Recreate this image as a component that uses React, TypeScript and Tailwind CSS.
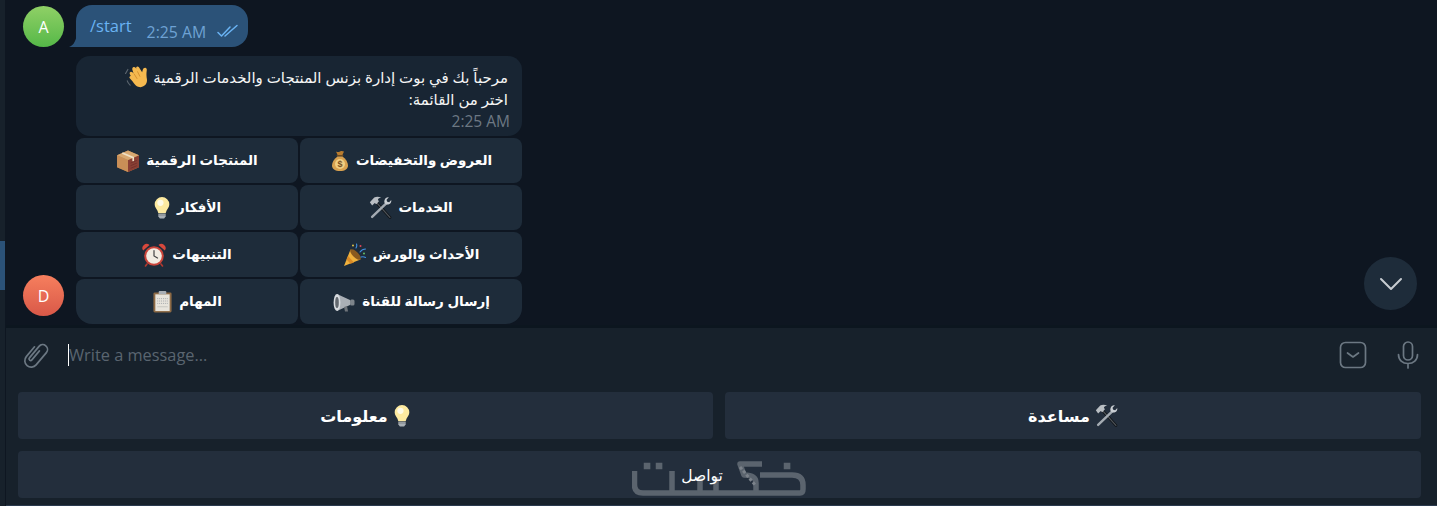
import React from "react";

const Wave = ({ s = 24 }: { s?: number }) => (
  <svg width={s} height={s} viewBox="1 2 21 21" fill="none">
    <path d="M1.500 8.500 3.500 5M3 15c.5 1.500 1.200 2.600 2.500 3.800" stroke="#5c6670" strokeWidth="1" strokeLinecap="round" />
    <path d="M6 10.500c-1-1.500-1.500-3 0-3.500 1-.3 1.700.5 2.500 1.500L7.500 5.500c-.5-1.500.2-2.500 1.200-2.700 1-.2 1.600.5 2.100 1.600L10.800 3c.5-.8 1.700-.9 2.400 0l2.800 4.500.5-2c.5-1.500 1.500-2.200 2.700-1.800 1 .4 1 1.500.8 2.500-.4 2.500-.2 5 .2 7.500.5 3.500-2 6.800-5.500 6.800-3.300 0-5.500-2.500-7-5L5 12.500c-.5-.8.300-1.500 1-2z" fill="#f5b94f" />
    <path d="M9 9l2.500 4M12 7l2 4" stroke="#d48f2e" strokeWidth=".8" strokeLinecap="round" />
  </svg>
);
const Bag = () => (
  <svg width="20" height="24" viewBox="0 0 20 22" fill="none">
    <path d="M6 1.500c1.500.8 2.500.8 4 0s2.500-.5 4 0l-2 4.500H8z" fill="#b97c2e" />
    <rect x="6.500" y="5" width="7" height="1.600" rx=".8" fill="#6b4a1f" />
    <path d="M7.500 6.500C4 9 2 12.500 2 15.500 2 19 5 21 10 21s8-2 8-5.500c0-3-2-6.500-5.500-9z" fill="#d9a250" />
    <circle cx="10" cy="14" r="5" fill="#f2cf83" />
    <text x="10" y="17.200" textAnchor="middle" fontSize="9" fontWeight="700" fill="#7a5220" fontFamily="Liberation Sans, sans-serif">$</text>
  </svg>
);
const Box = () => (
  <svg width="24" height="24" viewBox="0 0 23 23" fill="none">
    <path d="M11.500 1.500 22 6v11.500l-10.500 4.500L1 17.500V6z" fill="#b37a43" />
    <path d="M1 6l10.500 4.500V22L1 17.500z" fill="#c98f57" />
    <path d="M11.500 10.500 22 6v11.500l-10.500 4.500z" fill="#8a3f34" />
    <path d="M1 6l10.500-4.500L22 6l-10.500 4.500z" fill="#d7a871" />
    <path d="M6 3.800 16.500 8.300v3.500" stroke="#efe0c4" strokeWidth="1.600" />
    <path d="M14 13.500l6-2.500M14 16l6-2.500M14 18.500l6-2.500" stroke="#6e2f2a" strokeWidth=".8" />
  </svg>
);
const Tools = ({ s = 23 }: { s?: number }) => (
  <svg width={s} height={s} viewBox="0 0 22 22" fill="none">
    <path d="M6.500 5.500 20 20.500" stroke="#0f1215" strokeWidth="2.600" strokeLinecap="round" />
    <path d="M6.500 5.500 20 20.500" stroke="#4d5359" strokeWidth="1.200" strokeLinecap="round" />
    <path d="M17 6.500 3 20" stroke="#a4abb2" strokeWidth="2.300" strokeLinecap="round" />
    <path d="M.8 6 5 1.500c2-1 4-1 6.800 0-1.800.3-2.800 1-3.300 2l1 1.500L7 7.800 5.500 6.800 3 9z" fill="#b9bec3" />
    <path d="M15 3.500c.5-1.500 2-2.500 4-2.200L16.800 3.500l.5 2 2 .5 2-2.200c.3 2-.7 3.500-2.200 4.200-1.500.5-3 .2-4-1-.6-1-.6-2-.1-3.500z" fill="#c9ced3" />
  </svg>
);
const Bulb = () => (
  <svg width="18" height="23" viewBox="3 0 16 22" fill="none">
    <path d="M11 1a7 7 0 0 0-7 7c0 2.800 1.700 4.200 2.700 6 .5.900.5 1.800.8 2.500h7c.3-.7.300-1.600.8-2.500 1-1.800 2.700-3.200 2.700-6a7 7 0 0 0-7-7z" fill="#fdeaa0" />
    <circle cx="9.500" cy="6.500" r="3" fill="#fffbe6" />
    <path d="M7.500 17h7v2.500l-1.500 2h-4l-1.500-2z" fill="#a8afb5" />
    <path d="M7.500 18.200h7" stroke="#6f767c" strokeWidth=".7" />
  </svg>
);
const Party = () => (
  <svg width="24" height="24" viewBox="0 0 24 24" fill="none">
    <path d="M1 23 7.500 6.500 17.500 16.500z" fill="#f0b23d" />
    <path d="M5 13l6 6.500-3.500 1.200L3.500 16.500z" fill="#d98a26" />
    <ellipse cx="12.500" cy="11.500" rx="2.800" ry="7" transform="rotate(-45 12.500 11.500)" fill="#8a5a1e" />
    <path d="M13 5c1-1.500 1-2.500.5-4M17 9c1.500-2 3-3 5.500-3M18 14c1.500-.5 3-.5 4.500.5" stroke="#3f8fe0" strokeWidth="1.100" strokeLinecap="round" />
    <circle cx="17.500" cy="3" r="1" fill="#e0455a" />
    <circle cx="21" cy="10.500" r="1" fill="#63c06a" />
    <circle cx="10" cy="2.500" r=".9" fill="#f2d04a" />
  </svg>
);
const Clock = () => (
  <svg width="24" height="24" viewBox="0 0 24 24" fill="none">
    <path d="M1.200 7.500A4.200 4.200 0 0 1 7.500 2zM22.800 7.500A4.200 4.200 0 0 0 16.500 2z" fill="#d8483c" />
    <path d="M5 21l-1.500 2M19 21l1.500 2" stroke="#b2392f" strokeWidth="1.600" strokeLinecap="round" />
    <circle cx="12" cy="13" r="9.800" fill="#c9443a" />
    <circle cx="12" cy="13" r="7.800" fill="#f1ece2" />
    <path d="M12 7.500V13l3.500 2" stroke="#444" strokeWidth="1.200" strokeLinecap="round" />
  </svg>
);
const Horn = () => (
  <svg width="24" height="24" viewBox="0 0 24 24" fill="none">
    <path d="M5 4 18 10v5L5 21z" fill="#aab0b6" />
    <ellipse cx="5" cy="12.500" rx="3.400" ry="8.500" fill="#d7dbdf" />
    <ellipse cx="5" cy="12.500" rx="1.800" ry="5.500" fill="#62686e" />
    <rect x="18" y="9.500" width="4.500" height="6" rx="1.500" fill="#7d848a" />
    <path d="M12 17l1 4.500h3L15 16z" fill="#6e747a" />
  </svg>
);
const Clip = () => (
  <svg width="21" height="23" viewBox="0 0 22 24" fill="none">
    <rect x="1.500" y="2.500" width="19" height="21" rx="1.500" fill="#8d6a45" />
    <rect x="3.500" y="4.500" width="15" height="17.500" fill="#e7e4dc" />
    <rect x="7" y="1" width="8" height="3.500" rx="1" fill="#a9afb5" />
    <path d="M5.500 9h11M5.500 11.500h11M5.500 14h11" stroke="#a3a7ab" strokeWidth="1" strokeDasharray="1 1" />
    <path d="M5.500 17.500h11" stroke="#c5c5bf" strokeWidth="1" />
  </svg>
);

const Key = ({ label, icon, cls = "" }: { label: string; icon: React.ReactNode; cls?: string }) => (
  <div className={`h-[45px] bg-[#1e2c3a] flex items-center justify-center gap-[6px] text-[13.500px] font-semibold text-white rounded-[8px] ${cls}`}>
    <span className="pb-[1px]">{label}</span>
    {icon}
  </div>
);

const Avatar = ({ letter, cls }: { letter: string; cls: string }) => (
  <div className={`w-[41px] h-[41px] rounded-full flex items-center justify-center text-white text-[16px] font-medium shrink-0 ${cls}`}>{letter}</div>
);

export default function App() {
  return (
    <div className="w-[1437px] h-[506px] overflow-hidden flex bg-[#17212b] font-['Open_Sans','Noto_Sans','DejaVu_Sans',sans-serif]">
      <div className="w-[6px] shrink-0 h-full flex flex-col border-r border-[#0e1621] bg-[#17212b]">
        <div className="h-[241px]" />
        <div className="h-[49px] w-[5px] bg-[#2b5278]" />
      </div>
      <div className="flex-1 flex flex-col min-w-0">
        <div className="relative h-[325px] shrink-0 bg-[#0e1621] pl-[17px] pt-[5px]">
          <div className="flex items-end gap-[12px] h-[42px]">
            <Avatar letter="A" cls="bg-gradient-to-b from-[#8fd066] to-[#54b848]" />
            <div className="relative w-[172px] h-[42px] bg-[#2b5278] rounded-[16px] rounded-bl-none flex pl-[14px]">
              <svg className="absolute left-[-7px] bottom-0" width="8" height="14" viewBox="0 0 8 14">
                <path d="M8 0v14H0c3-1 7-4 8-14z" fill="#2b5278" />
              </svg>
              <span className="text-[16.500px] leading-[20px] mt-[11px] text-[#6ab3f3]">/start</span>
              <span className="text-[15.800px] leading-[20px] mt-[17px] ml-[15px] text-[#6ea2d4]">2:25 AM</span>
              <svg className="ml-[11px] mt-[19px]" width="22" height="14" viewBox="0 0 22 14" fill="none" stroke="#6ab3f3" strokeWidth="1.500" strokeLinecap="round" strokeLinejoin="round">
                <path d="M1 8.500 4.500 12 13 3" />
                <path d="M8 12 20 1.500" />
              </svg>
            </div>
          </div>
          <div className="flex items-end gap-[12px] mt-[9px]">
            <Avatar letter="D" cls="mb-[8px] bg-gradient-to-b from-[#f67f5e] to-[#d95848]" />
            <div className="w-[446px] flex flex-col gap-[2px]">
              <div dir="rtl" className="h-[80px] bg-[#182533] rounded-[14px] pr-[14px] pl-[12px] pt-[10px] text-[15px] leading-[23px] text-[#f5f5f5]">
                <div className="flex items-center gap-[4px] h-[23px]"><span>مرحباً بك في بوت إدارة بزنس المنتجات والخدمات الرقمية</span><Wave /></div>
                <div className="-mt-[1px]">اختر من القائمة:</div>
                <div dir="ltr" className="text-right text-[15.500px] leading-[19px] mt-[1px] -mr-[2px] text-[#6d7883]">2:25 AM</div>
              </div>
              <div dir="rtl" className="grid grid-cols-2 gap-[2px]">
                <Key label="العروض والتخفيضات" icon={<Bag />} />
                <Key label="المنتجات الرقمية" icon={<Box />} />
                <Key label="الخدمات" icon={<Tools />} />
                <Key label="الأفكار" icon={<Bulb />} />
                <Key label="الأحداث والورش" icon={<Party />} />
                <Key label="التنبيهات" icon={<Clock />} />
                <Key label="إرسال رسالة للقناة" icon={<Horn />} cls="rounded-br-[16px]" />
                <Key label="المهام" icon={<Clip />} cls="rounded-bl-[16px]" />
              </div>
            </div>
          </div>
          <div className="absolute right-[20px] top-[257px] w-[53px] h-[53px] rounded-full bg-[#1e2c3a] flex items-center justify-center">
            <svg width="24" height="14" viewBox="0 0 24 14" fill="none" stroke="#c7ccd1" strokeWidth="2" strokeLinecap="round" strokeLinejoin="round"><path d="M2 2l10 10L22 2" /></svg>
          </div>
        </div>
        <div className="h-[3px] shrink-0 bg-[#0c161f]" />
        <div className="h-[54px] shrink-0 flex items-center pl-[15px] pr-[16px]">
          <svg width="30" height="32" viewBox="0 0 24 30" fill="none" stroke="#6c7883" strokeWidth="1.600" strokeLinecap="round" strokeLinejoin="round" className="shrink-0">
            <g transform="rotate(40 12 15)">
              <path d="M6 10V22a6 6 0 0 0 12 0V7a4.500 4.500 0 0 0-9 0V21a1.500 1.500 0 0 0 3 0V10" />
            </g>
          </svg>
          <div className="w-px h-[22px] bg-white ml-[17px]" />
          <span className="text-[16.350px] leading-[22px] text-[#5a6570]">Write a message...</span>
          <div className="flex-1" />
          <svg width="28" height="28" viewBox="0 0 28 28" fill="none" stroke="#6c7883" strokeWidth="1.700" strokeLinecap="round" strokeLinejoin="round" className="shrink-0 -mt-[1px]">
            <rect x="1.500" y="1.500" width="25" height="25" rx="5" />
            <path d="M8.500 12l5.500 4 5.500-4" />
          </svg>
          <svg width="24" height="28" viewBox="0 0 24 28" fill="none" stroke="#6c7883" strokeWidth="1.700" strokeLinecap="round" className="ml-[29px] mr-[1px] shrink-0">
            <rect x="7.500" y="1" width="9" height="18" rx="4.500" />
            <path d="M2.500 13.500c0 5.500 4 9 9.500 9s9.500-3.500 9.500-9M12 22.500V27" />
          </svg>
        </div>
        <div className="flex-1 flex flex-col gap-[12px] pl-[12px] pr-[16px] pt-[10px]">
          <div dir="rtl" className="grid grid-cols-[696px_695px] gap-[12px]">
            <div className="h-[47px] rounded-[4px] bg-[#232e3c] flex items-center justify-center gap-[5px] text-[16px] font-semibold text-white">
              <Tools /><span>مساعدة</span>
            </div>
            <div className="h-[47px] rounded-[4px] bg-[#232e3c] flex items-center justify-center gap-[5px] text-[16px] font-semibold text-white">
              <Bulb /><span>معلومات</span>
            </div>
          </div>
          <div className="relative h-[47px] rounded-[4px] bg-[#232e3c] flex items-center justify-center text-[15.500px] text-white">
            <svg className="absolute left-[614px] top-[10px]" width="174" height="37" viewBox="0 0 174 37" fill="none" stroke="#5b646e" strokeWidth="5.500" strokeLinejoin="round" aria-hidden="true">
              <path d="M2.500 10V24Q2.500 32 11 32H168Q171 32 171 28V24Q171 14 160 14H128" />
              <path d="M40 10V32M68 16V32M84 16V32" />
              <path d="M130 3H108L112 14Q124 14 124 22V32" />
              <path d="M15 5h.1M27 5h.1M155 5h.1" strokeWidth="6.500" strokeLinecap="square" />
              <path d="M108 6 124 25" stroke="#7b828a" strokeWidth="3" strokeDasharray="3 2" />
            </svg>
            <span className="relative mr-[35px] pt-[3px]">تواصل</span>
          </div>
        </div>
        <div className="h-px shrink-0 bg-[#2a3a4e]" />
      </div>
    </div>
  );
}
